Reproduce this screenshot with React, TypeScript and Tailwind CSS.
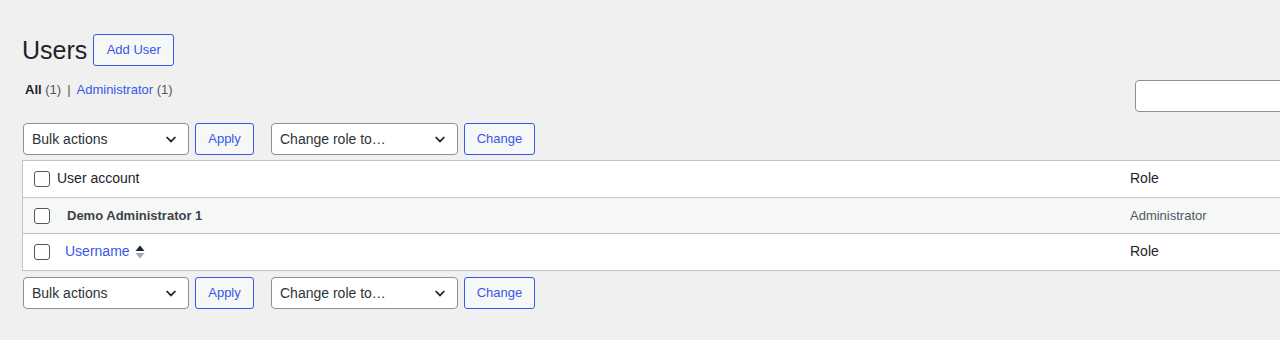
import React from "react";

const font = { fontFamily: '"Liberation Sans", Arial, sans-serif' };

const Chevron = () => (
  <svg width="16" height="16" viewBox="0 0 20 20" className="text-[#1d2327] -ml-px">
    <path d="M4.5 7.5l5.5 5.5 5.5-5.5" fill="none" stroke="currentColor" strokeWidth="2.2" />
  </svg>
);

const Select = ({ label, width }: { label: string; width: string }) => (
  <div
    className={`${width} h-8 flex items-center justify-between bg-white border border-[#8c8f94] rounded-[4px] pl-2 pr-[9px] text-[14px] text-[#2c3338]`}
  >
    <span>{label}</span>
    <Chevron />
  </div>
);

const Btn = ({ children, width }: { children: React.ReactNode; width: string }) => (
  <button
    className={`${width} h-8 flex items-center justify-center bg-[#f6f7f7] border border-[#3858e9] rounded-[3px] text-[13px] text-[#3858e9]`}
  >
    {children}
  </button>
);

const Checkbox = () => (
  <span className="block w-4 h-4 bg-white border border-[#50575e] rounded-[3px]" />
);

const TableNav = () => (
  <div className="flex items-center h-8 ml-px">
    <Select label="Bulk actions" width="w-[166px]" />
    <div className="ml-[6px]">
      <Btn width="w-[59px]">Apply</Btn>
    </div>
    <div className="ml-[17px]">
      <Select label="Change role to…" width="w-[187px]" />
    </div>
    <div className="ml-[6px]">
      <Btn width="w-[71px]">Change</Btn>
    </div>
  </div>
);

const SortArrows = () => (
  <svg width="10" height="16" viewBox="0 0 10 16" className="ml-[5px] mt-[1px]">
    <path d="M5 1.5L9.5 7H0.5z" fill="#1d2327" />
    <path d="M5 14.5L9.5 9H0.5z" fill="#a7aaad" />
  </svg>
);

export default function App() {
  return (
    <div className="w-full h-[340px] overflow-hidden bg-[#f0f0f1]" style={font}>
      <div className="w-[1300px] pl-[22px] pt-[34px]">
        <div className="flex items-center h-8">
          <h1 className="text-[25px] leading-8 text-[#1d2327]">Users</h1>
          <div className="ml-[6px]">
            <Btn width="w-[81px]">Add User</Btn>
          </div>
        </div>

        <div className="flex justify-between items-start mt-[14px] h-8">
          <div className="pl-[3px] pt-px text-[13px] leading-[18px] text-[#50575e]">
            <span className="font-bold text-[#1d2327]">All</span> (1)
            <span className="mx-[6px]">|</span>
            <span className="text-[#3858e9]">Administrator</span> (1)
          </div>
          <div className="w-[165px] h-8 bg-white border border-[#8c8f94] rounded-[4px]" />
        </div>

        <div className="mt-[11px]">
          <TableNav />
        </div>

        <div className="mt-[5px] bg-white border border-[#c3c4c7] text-[#1d2327]">
          <div className="grid grid-cols-[1fr_177px] h-[37px] pb-px items-center border-b border-[#c3c4c7]">
            <div className="flex items-center pl-[11px]">
              <Checkbox />
              <span className="ml-[7px] text-[14px]">User account</span>
            </div>
            <span className="pl-[8px] text-[14px]">Role</span>
          </div>
          <div className="grid grid-cols-[1fr_177px] h-9 pt-px items-center bg-[#f6f7f7] border-b border-[#c3c4c7]">
            <div className="flex items-center pl-[11px]">
              <Checkbox />
              <span className="ml-[17px] text-[13px] font-bold text-[#3c434a]">Demo Administrator 1</span>
            </div>
            <span className="pl-[8px] text-[13px] text-[#50575e]">Administrator</span>
          </div>
          <div className="grid grid-cols-[1fr_177px] h-9 pb-px items-center">
            <div className="flex items-center pl-[11px]">
              <Checkbox />
              <span className="ml-[15px] text-[14px] text-[#3858e9]">Username</span>
              <SortArrows />
            </div>
            <span className="pl-[8px] text-[14px]">Role</span>
          </div>
        </div>

        <div className="mt-[6px]">
          <TableNav />
        </div>
      </div>
    </div>
  );
}
